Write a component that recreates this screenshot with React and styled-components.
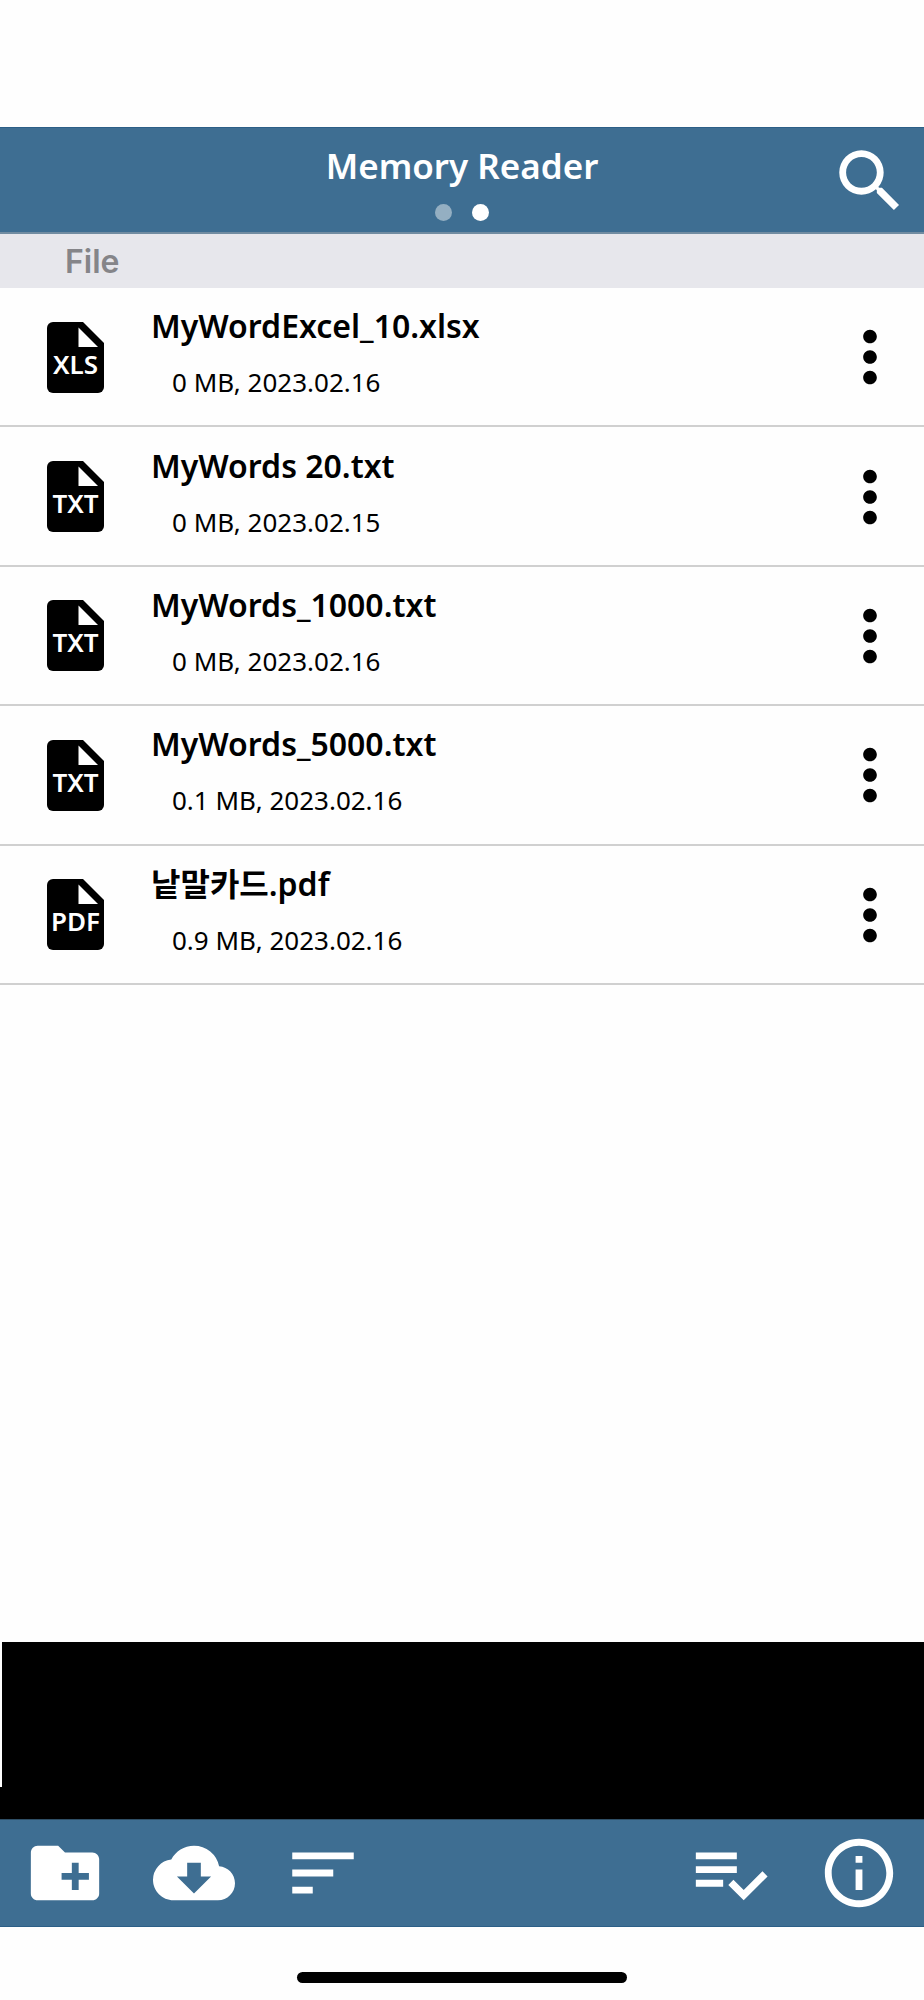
import React from 'react';
import styled, { createGlobalStyle } from 'styled-components';
import {
  MdSearch,
  MdMoreVert,
  MdCreateNewFolder,
  MdCloudDownload,
  MdSort,
  MdInfoOutline,
} from 'react-icons/md';

const GlobalStyle = createGlobalStyle`
  *, *::before, *::after { box-sizing: border-box; }
  body {
    margin: 0;
    background: #fefefe;
    color: #000;
    font-family: 'Noto Sans', 'Noto Sans CJK KR', sans-serif;
  }
`;

const Screen = styled.div`
  display: flex;
  flex-direction: column;
  min-height: 100vh;
  padding-top: 127px;
`;

const Header = styled.header`
  display: grid;
  grid-template-columns: 82px 1fr 82px;
  align-items: center;
  height: 107px;
  padding: 1px 13px 0;
  background: #3e6e92;
  border-top: 1px solid #2c5f87;
  border-bottom: 2px solid #718ca1;
`;

const TitleGroup = styled.div`
  grid-column: 2;
  display: flex;
  flex-direction: column;
  align-items: center;
  gap: 13px;
`;

const Title = styled.h1`
  margin: 0;
  color: #fff;
  font-size: 35px;
  font-weight: 600;
  line-height: 50px;
`;

const Pager = styled.div`
  display: flex;
  gap: 20px;
`;

const PageDot = styled.button`
  width: 17px;
  height: 17px;
  padding: 0;
  border: 0;
  border-radius: 50%;
  background: ${({ $current }) => ($current ? '#fff' : '#94afc2')};
`;

const IconButton = styled.button`
  display: flex;
  padding: 0;
  border: 0;
  background: none;
  color: ${({ $dark }) => ($dark ? '#000' : '#fff')};

  svg {
    width: 82px;
    height: 82px;
  }
`;

const SectionTitle = styled.h2`
  margin: 0;
  padding: 2px 65px 0;
  background: #e7e7ec;
  color: #858589;
  font-family: Inter, sans-serif;
  font-size: 32px;
  font-weight: 600;
  line-height: 52px;
`;

const FileList = styled.ul`
  display: grid;
  grid-auto-rows: 1fr;
  min-height: 697px;
  margin: 0;
  padding: 0;
  list-style: none;
`;

const FileRow = styled.li`
  display: flex;
  align-items: center;
  padding: 1px 13px 0 47px;
  border-bottom: 2px solid #d0d0d0;
`;

const FileBadge = styled.svg`
  flex: none;
  width: 57px;
  height: 71px;

  text {
    fill: #fff;
    font-size: 26px;
    font-weight: 600;
    text-anchor: middle;
  }
`;

const FileText = styled.div`
  flex: 1;
  min-width: 0;
  padding: 0 0 6px 47px;
`;

const FileName = styled.div`
  font-size: 32px;
  font-weight: 600;
  line-height: 56px;
`;

const FileMeta = styled.div`
  padding-left: 21px;
  font-size: 26px;
  line-height: 56px;
`;

const Spacer = styled.div`
  flex: 1;
`;

const Banner = styled.div`
  height: 177px;
  background: #000;

  &::before {
    content: '';
    display: block;
    width: 2px;
    height: 145px;
    background: #fefefe;
  }
`;

const Toolbar = styled.nav`
  display: flex;
  justify-content: space-between;
  align-items: center;
  height: 108px;
  padding: 0 24px;
  background: #3e6e92;
  border-top: 1px solid #2f4f66;
  border-bottom: 1px solid #2c5f87;
`;

const ToolGroup = styled.div`
  display: flex;
  gap: 47px;
`;

const HomeArea = styled.footer`
  display: flex;
  justify-content: center;
  height: 73px;
  padding-top: 45px;
`;

const HomeIndicator = styled.div`
  width: 330px;
  height: 11px;
  border-radius: 6px;
  background: #000;
`;

const files = [
  { type: 'XLS', name: 'MyWordExcel_10.xlsx', meta: '0 MB, 2023.02.16' },
  { type: 'TXT', name: 'MyWords 20.txt', meta: '0 MB, 2023.02.15' },
  { type: 'TXT', name: 'MyWords_1000.txt', meta: '0 MB, 2023.02.16' },
  { type: 'TXT', name: 'MyWords_5000.txt', meta: '0.1 MB, 2023.02.16' },
  { type: 'PDF', name: '낱말카드.pdf', meta: '0.9 MB, 2023.02.16' },
];

function FileIcon({ type }) {
  return (
    <FileBadge viewBox="0 0 57 71">
      <path d="M6 0H36L57 21V65a6 6 0 0 1-6 6H6a6 6 0 0 1-6-6V6a6 6 0 0 1 6-6z" />
      <path d="M31.500 5.500V25H51z" fill="#fff" />
      <text x="28.500" y="52">{type}</text>
    </FileBadge>
  );
}

function SelectListIcon() {
  return (
    <svg viewBox="0 0 24 24" fill="currentColor">
      <path d="M14 10H2v2h12v-2zm0-4H2v2h12V6zM2 16h8v-2H2v2zm19.500-4.500L23 13l-6.990 7-4.510-4.500L13 14l3.010 3 5.490-5.500z" />
    </svg>
  );
}

export default function App() {
  return (
    <>
      <GlobalStyle />
      <Screen>
        <Header>
          <TitleGroup>
            <Title>Memory Reader</Title>
            <Pager>
              <PageDot aria-label="Page 1" />
              <PageDot aria-label="Page 2" aria-current="page" $current />
            </Pager>
          </TitleGroup>
          <IconButton aria-label="Search"><MdSearch /></IconButton>
        </Header>
        <SectionTitle>File</SectionTitle>
        <FileList>
          {files.map((file) => (
            <FileRow key={file.name}>
              <FileIcon type={file.type} />
              <FileText>
                <FileName>{file.name}</FileName>
                <FileMeta>{file.meta}</FileMeta>
              </FileText>
              <IconButton $dark aria-label={`Options for ${file.name}`}><MdMoreVert /></IconButton>
            </FileRow>
          ))}
        </FileList>
        <Spacer />
        <Banner />
        <Toolbar>
          <ToolGroup>
            <IconButton aria-label="New folder"><MdCreateNewFolder /></IconButton>
            <IconButton aria-label="Download"><MdCloudDownload /></IconButton>
            <IconButton aria-label="Sort"><MdSort /></IconButton>
          </ToolGroup>
          <ToolGroup>
            <IconButton aria-label="Select"><SelectListIcon /></IconButton>
            <IconButton aria-label="Information"><MdInfoOutline /></IconButton>
          </ToolGroup>
        </Toolbar>
        <HomeArea><HomeIndicator /></HomeArea>
      </Screen>
    </>
  );
}
